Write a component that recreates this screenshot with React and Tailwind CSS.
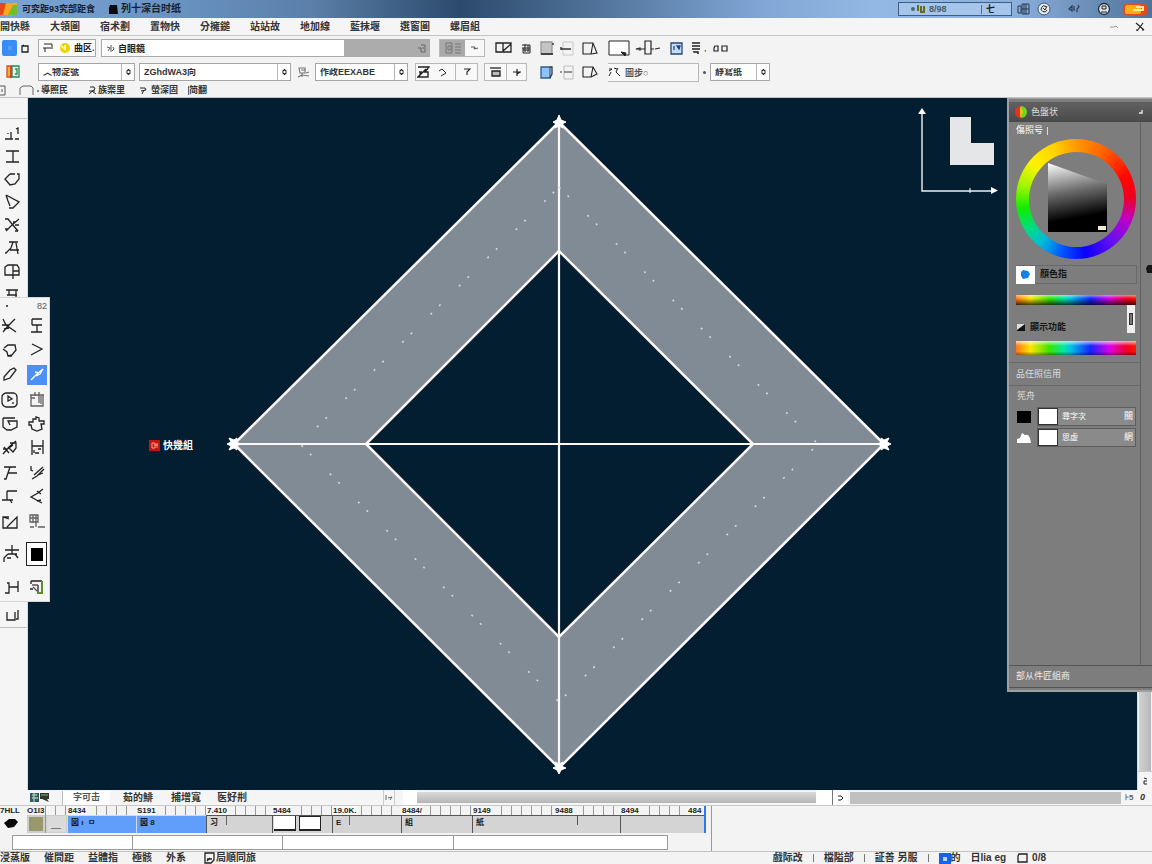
import React from "react";

function Glyph({ w = 18, h = 18, d, fill = "none", stroke = "#222", sw = 1.3, children, className = "" }) {
  return (
    <svg width={w} height={h} viewBox={`0 0 ${w} ${h}`} fill={fill} stroke={stroke} strokeWidth={sw} className={`shrink-0 ${className}`} aria-hidden="true">
      {d ? <path d={d} /> : null}
      {children}
    </svg>
  );
}

function IconButton({ label, className = "", children }) {
  return (
    <button type="button" aria-label={label} className={`flex shrink-0 items-center justify-center ${className}`}>
      {children}
    </button>
  );
}

function Combo({ label, value, className = "" }) {
  return (
    <div className={`flex h-[18px] shrink-0 items-center border border-[#a5a5a5] bg-white ${className}`}>
      <select aria-label={label} className="h-full min-w-0 flex-1 appearance-none bg-transparent px-1 text-[9px] font-semibold leading-none text-[#333] outline-none">
        <option>{value}</option>
      </select>
      <span className="flex h-full w-[13px] shrink-0 items-center justify-center border-l border-[#b5b5b5]">
        <Glyph w={7} h={8} d="M1.5 3.5 L3.5 1.5 L5.5 3.5 M1.5 4.5 L3.5 6.5 L5.5 4.5" sw={1.2} />
      </span>
    </div>
  );
}

const menus = ["開快縣", "大領圖", "宿术劃", "置物快", "分擁鎚", "站站故", "地加線", "藍抹堰", "選窗圖", "螺眉組"];

function TitleBar() {
  return (
    <header className="flex h-[18px] shrink-0 items-center overflow-hidden bg-[linear-gradient(90deg,#7ba5d6_0%,#6891c0_16%,#5b7fa9_27%,#2c4a6c_40%,#48698f_49%,#7fa6d5_66%,#93b8e3_76%,#8bb0dc_88%,#507399_100%)] text-[10px] font-semibold text-[#17212e]">
      <svg width="17" height="14" viewBox="0 0 17 14" className="shrink-0" aria-hidden="true">
        <path d="M0 1H7V13H0Z" fill="#e5481d" />
        <path d="M6 1H17V7L12 13H3Z" fill="#ffa51f" />
        <path d="M13 3H17V12L14 13H8Z" fill="#6fbd33" />
      </svg>
      <h1 className="ml-[5px] w-[80px] whitespace-nowrap text-[9px]">可究距93究部距食</h1>
      <Glyph w={11} h={11} className="ml-[6px]" stroke="none"><path d="M2 1H9L10 10H1V4Z" fill="#080b10" /></Glyph>
      <span className="ml-[2px] whitespace-nowrap">列十深台时纸</span>
      <div className="ml-auto flex items-center pr-[5px]">
        <div className="flex h-[14px] w-[114px] items-center border border-[#3f5c81] bg-[#a6c5ea] text-[9px]">
          <span className="ml-3 h-1 w-1 rounded-full bg-[#4d6885]" />
          <Glyph w={10} h={10} d="M3 1V7M6 2V8H9V2" stroke="#666c16" sw={2} />
          <span className="ml-1 text-[#4a5c70]">8/98</span>
          <span className="ml-auto mr-4 border-l border-[#566f8d] pl-1">七</span>
        </div>
        <Glyph w={14} h={14} className="ml-[5px]" d="M1 4H4V11H1Z M5 2H12V12H5ZM7 2V12M9 2V12M5 7H12" stroke="#273b56" sw={1} />
        <Glyph w={14} h={14} className="ml-[6px]"><circle cx="7" cy="7" r="6" fill="#e4e9ef" stroke="#41536b" strokeWidth="1" /><path d="M9 4.500A3 3 0 1 0 10 8M6 6L8 8L10 4" stroke="#222" strokeWidth="1" /></Glyph>
        <Glyph w={13} h={10} className="ml-[17px]" d="M1 5L4 2V7ZM6 2V7M10 1L11 3L9 5V8" stroke="#2a3c55" sw={1.2} />
        <Glyph w={14} h={14} className="ml-4"><circle cx="7" cy="7" r="5.5" fill="#dfe5eb" stroke="#1e293a" /><path d="M5 4H9V7H5ZM4 10H10" strokeWidth="1" /></Glyph>
        <IconButton label="關閉" className="ml-[12px] h-[11px] w-[24px] rounded-[3px] bg-[#e34b18]">
          <svg width="24" height="11" viewBox="0 0 24 11" aria-hidden="true"><rect x="2" y="1" width="16" height="9" rx="2" fill="#ffad16" /><path d="M13 3H20V6H10" fill="none" stroke="#ffe9a3" strokeWidth="2" /></svg>
        </IconButton>
      </div>
    </header>
  );
}

function MenuBar() {
  return (
    <nav className="flex h-[18px] shrink-0 items-center gap-[20px] overflow-hidden border-b border-[#c4c4c4] bg-[#f5f5f5] pr-1 text-[10px] font-semibold text-[#333]">
      {menus.map((m) => (
        <button key={m} type="button" className="w-[30px] shrink-0 whitespace-nowrap text-left">{m}</button>
      ))}
      <IconButton label="最小化" className="ml-auto h-4 w-3"><Glyph w={10} h={8} d="M1 4H5L7 3L9 5" stroke="#999" sw={1} /></IconButton>
      <IconButton label="關閉文件" className="-ml-2 h-4 w-4"><Glyph w={10} h={10} d="M1 1L9 8M8 1L2 9M1 8H3M7 8H9" sw={1.2} /></IconButton>
    </nav>
  );
}

function ToolRowOne() {
  return (
    <div className="flex h-[24px] shrink-0 items-center">
      <IconButton label="選取" className="ml-[2px] h-[16px] w-[15px] rounded-[2px] bg-[#398bf5]"><span className="h-1 w-1 bg-[#529cf9]" /></IconButton>
      <IconButton label="新增" className="ml-[4px] h-4 w-2"><Glyph w={8} h={9} d="M1 2H7V8H1Z M1 2L3 1" /></IconButton>
      <div className="ml-[9px] flex h-[18px] w-[58px] shrink-0 items-center border border-[#aaa] bg-[#fbfbfb] text-[9px] font-semibold">
        <Glyph w={12} h={10} className="ml-[3px]" d="M2 1H10V6M1 5H9M3 5V9" sw={1} />
        <Glyph w={12} h={12} className="ml-[5px]" stroke="none"><circle cx="6" cy="6" r="5" fill="#e9d100" /><path d="M2 4L6 7V3" stroke="#fff6a2" strokeWidth="2" /></Glyph>
        <span className="ml-[3px] whitespace-nowrap">曲区.</span>
      </div>
      <div className="ml-[5px] flex h-[18px] w-[329px] shrink-0 border border-[#aaa] bg-[#acacac]">
        <label className="flex w-[242px] items-center bg-white">
          <Glyph w={9} h={9} className="ml-1" d="M1 3L4 4L2 7M5 1V8M7 3L8 5L6 7" sw={1} stroke="#555" />
          <input aria-label="名稱" defaultValue="自眼鏡" className="ml-[3px] min-w-0 flex-1 bg-transparent text-[9px] font-semibold text-[#222] outline-none" />
        </label>
        <span className="flex flex-1 items-center justify-end pr-[3px]"><Glyph w={9} h={9} d="M1 4H4V8M4 1H8V8H4M5 4H7" stroke="#666" sw={1} /></span>
      </div>
      <div className="ml-[9px] flex h-[18px] w-[46px] shrink-0 border border-[#b8b8b8] bg-[#f8f8f8]">
        <IconButton label="檢視模式" className="w-[25px] bg-[#a9a9a9]"><Glyph w={20} h={12} d="M3 1H9V11H3ZM5 4H8V8H5ZM12 2H18M12 5H18M12 8H18M12 11H18" stroke="#777" sw={1} /></IconButton>
        <IconButton label="展開" className="w-[19px]"><Glyph w={9} h={6} d="M1 2H5L4 4L8 3" sw={1} stroke="#555" /></IconButton>
      </div>
      <IconButton label="對齊" className="ml-[10px] h-4 w-[18px]"><Glyph w={18} h={12} d="M1 1H8V10H1ZM8 1H16V10H8M8 9L16 2" sw={1.3} /></IconButton>
      <IconButton label="格線" className="ml-[8px] h-4 w-[11px]"><Glyph w={11} h={11} d="M1 2H9V10H2V5M4 1V9M7 2V9M1 5H9M2 7H9" sw={1} /></IconButton>
      <IconButton label="灰階" className="ml-[8px] h-4 w-[14px]"><Glyph w={14} h={14}><path d="M1 1H12V13H1Z" fill="#c4c4c4" stroke="#999" /><path d="M1 13H13M13 2V4" /></Glyph></IconButton>
      <IconButton label="分割" className="ml-[6px] h-4 w-[15px]"><Glyph w={15} h={15} d="M3 1H13V14H3Z" stroke="#c7c7c7" sw={1}><path d="M1 8H11M1 6V9" stroke="#333" strokeWidth="1.4" /></Glyph></IconButton>
      <IconButton label="頁面" className="ml-[7px] h-4 w-[16px]"><Glyph w={16} h={14} d="M1 2H11L15 12L9 13H1ZM11 2L9 13" sw={1.1} /></IconButton>
      <IconButton label="畫布" className="ml-[10px] h-[18px] w-[22px]"><Glyph w={22} h={17} sw={1}><path d="M1 1H21V15H1Z" fill="#fff" /><path d="M13 12L18 13L17 16Z" fill="#222" /></Glyph></IconButton>
      <IconButton label="縮放" className="ml-[5px] h-4 w-[26px]"><Glyph w={26} h={16} d="M1 9L5 8V10ZM5 9H10M16 9H19M10 1H16V14H10ZM20 9L25 8" sw={1.2} /></IconButton>
      <IconButton label="篩選" className="ml-[9px] h-4 w-[14px]"><Glyph w={14} h={13}><path d="M1 1H12V12H1Z" fill="#c4ddfb" stroke="#29466a" /><path d="M4 4V8M7 4L10 4L9 7Z" fill="#315da0" stroke="#26497d" /></Glyph></IconButton>
      <IconButton label="清單" className="ml-[7px] h-4 w-[10px]"><Glyph w={10} h={12} d="M1 1H9M1 4H9M1 7H9M3 9V10H7V12" sw={1.5} /></IconButton>
      <span className="ml-[3px] text-[9px]">,</span>
      <IconButton label="配對" className="ml-[6px] h-4 w-[16px]"><Glyph w={16} h={9} d="M2 2H5V7H1V4ZM9 2H14V7H9Z" sw={1.2} /></IconButton>
    </div>
  );
}

function ToolRowTwo() {
  return (
    <div className="flex h-[24px] shrink-0 items-center">
      <IconButton label="圖庫" className="ml-[6px] h-[14px] w-[15px]">
        <Glyph w={15} h={14}><path d="M1 1H5V12H1Z" fill="#efb32f" stroke="#d94d29" /><path d="M6 1H13V12H6Z" fill="#eaf2df" stroke="#25895c" /><path d="M9 4H11V9H9" stroke="#25895c" /><path d="M5 13V1" stroke="#cc3824" /></Glyph>
      </IconButton>
      <Combo label="圖層" value="︿物淀號" className="ml-[17px] w-[97px]" />
      <Combo label="尺寸" value="ZGhdWA3向" className="ml-[4px] w-[152px]" />
      <Glyph w={13} h={13} className="ml-[6px]" d="M2 2H8V7H3ZM4 4H9M1 11L5 9L12 10M5 7V11M9 7L12 6" stroke="#777" sw={1.1} />
      <Combo label="筆刷" value="作政EEXABE" className="ml-[5px] w-[93px]" />
      <div className="ml-[7px] flex h-[18px] w-[63px] shrink-0 border border-[#b8b8b8] bg-[#f8f8f8]">
        <IconButton label="變形" className="w-[14px]"><Glyph w={13} h={14} d="M1 2H12L8 7H11V12H1L9 4M2 12L4 7H2" sw={1.4} /></IconButton>
        <IconButton label="旋轉" className="flex-1"><Glyph w={9} h={9} d="M1 3L4 1L8 5L3 8" sw={1} /></IconButton>
        <IconButton label="翻轉" className="w-[22px] border-l border-[#b8b8b8]"><Glyph w={8} h={8} d="M1 1H7L4 4V7" sw={1.1} /></IconButton>
      </div>
      <div className="ml-[6px] flex h-[18px] w-[43px] shrink-0 border border-[#b8b8b8] bg-[#f8f8f8]">
        <IconButton label="圖層順序" className="flex-1"><Glyph w={14} h={12}><path d="M3 5H11V10H3Z" fill="#bbb" /><path d="M1 2H12" /></Glyph></IconButton>
        <IconButton label="中心點" className="w-[20px] border-l border-[#b8b8b8]"><Glyph w={10} h={9} d="M1 4H9M5 1V8M5 6L8 4" sw={1.2} /></IconButton>
      </div>
      <IconButton label="填色" className="ml-[13px] h-4 w-[14px]"><Glyph w={14} h={13}><path d="M1 1H10V12H1Z" fill="#8fc2f7" stroke="#2b5e99" /><path d="M10 1H12V8L10 12" stroke="#333" /></Glyph></IconButton>
      <IconButton label="裁切" className="ml-[6px] h-4 w-[15px]"><Glyph w={15} h={15} d="M4 1H13V14H4Z" stroke="#bbb" sw={1}><path d="M0 7H2M4 7H12" stroke="#333" /></Glyph></IconButton>
      <IconButton label="摺頁" className="ml-[7px] h-4 w-[16px]"><Glyph w={16} h={14} d="M1 2H11L15 9L9 12H1ZM11 2L9 12" sw={1.1} /></IconButton>
      <label className="ml-[10px] flex h-[19px] w-[91px] shrink-0 items-center border-y border-r border-[#b8b8b8] bg-[#f7f7f7]">
        <Glyph w={14} h={12} d="M1 3H4L1 5M6 2L9 3M10 2L8 6M3 6L1 10M8 6L12 10" sw={1} />
        <input aria-label="濃度" defaultValue="圖步○" className="ml-[3px] min-w-0 flex-1 bg-transparent text-[9px] font-semibold text-[#555] outline-none" />
      </label>
      <span className="ml-[4px] h-[3px] w-[3px] rounded-full bg-[#555]" />
      <Combo label="品質" value="靜寫纸" className="ml-[4px] w-[60px]" />
    </div>
  );
}

function ToolRowThree() {
  const item = "flex items-center whitespace-nowrap";
  return (
    <div className="flex h-[14px] shrink-0 items-center overflow-hidden border-b border-[#bfc3c6] text-[9px] font-semibold text-[#333]">
      <Glyph w={6} h={11} d="M0 1H5V10H0M2 4V7" sw={1} stroke="#555" />
      <Glyph w={16} h={11} className="ml-[13px]" d="M1 10V3L4 1M4 1H12L14 3V10" sw={1} stroke="#666" />
      <button type="button" className={`${item} ml-[2px] w-[51px]`}><span className="mr-[2px] h-[2px] w-[2px] bg-[#888]" />導照民</button>
      <button type="button" className={item}><Glyph w={9} h={9} d="M2 1H6L7 3L1 8M1 5H7M4 5L8 8" sw={1} /><span className="ml-[1px]">族案里</span></button>
      <button type="button" className={`${item} ml-[14px]`}><Glyph w={9} h={9} d="M1 2H6L7 4L2 5M5 4L3 8" sw={1} /><span className="ml-[3px]">螢深固</span></button>
      <button type="button" className={`${item} ml-[10px] border-l border-[#666]`}>简翻</button>
    </div>
  );
}

const sideTools = [
  ["筆尖", "M1 14H9M7 7V14M4 8V9M11 14H15M12 4L14 3V9"],
  ["文字游標", "M2 3H15M9 3V14M2 14H15"],
  ["多邊形", "M6 3H11M13 3H15V8L11 13L6 14L1 8L6 3"],
  ["箭頭", "M2 1L15 8L9 14H5M2 1L4 7L6 12"],
  ["變形剪", "M1 2H4L8 7L14 14M15 2L8 8L2 14M1 12H4M9 5H12M11 8H15M11 14H14"],
  ["人形", "M5 2H14M9 2L7 8L2 13H1M12 3L14 14M6 10H15"],
  ["框架", "M1 4L4 2H13L15 5V12H1ZM9 2V16M9 8H15"],
  ["標記", "M2 4H14M5 4V9M12 4V14M3 9H13"],
];

const paletteTools = [
  ["剪刀", "M2 2L5 8L15 15M14 2L7 9L2 15M1 8H8M3 12L8 11"],
  ["尺規", "M4 2H14M4 2V8M4 8H14M9 8V15M3 15H14"],
  ["套索", "M3 6L7 3H14L15 8L11 13L7 14L6 10L2 7M7 14H11"],
  ["折線", "M4 2L8 4L14 7L3 13"],
  ["橡皮擦", "M3 14V11L9 4L13 2L15 4L9 12L3 14Z"],
  ["直線", "M3 14L9 8L15 3L12 8L8 10M7 6L11 7"],
  ["播放框", "M5 2H13Q16 3 16 6V13Q15 16 12 16H5Q1 15 1 11V6Q1 3 5 2ZM7 5V10L11 8ZM12 11V13"],
  ["剪貼板", "M3 4H15V15H3ZM2 4H16M7 1V5M11 1V12M3 7H7M13 5V13"],
  ["對話框", "M2 3H14M2 3V12L6 15H10L16 12V6L7 6L9 10"],
  ["雲形", "M5 4H8V2L11 3V6H16V9H13L14 14L9 16L4 14L3 10H1V7H5Z"],
  ["節點", "M2 15L8 8L15 2M3 8L8 14M2 10H6M9 4H15V9L12 13L8 9L12 6"],
  ["梯子", "M4 1V16M15 1V15M4 7H15M10 10H13M7 14H11M6 11V14"],
  ["標尺", "M3 3H15M9 3L7 9L5 15H3M7 9H16"],
  ["斜線筆", "M3 2V6L5 7M6 11L15 3M4 15L9 12L16 5M10 11L15 9"],
  ["角線", "M6 3H16M6 3V12M1 12H12M9 12L11 15"],
  ["轉角", "M15 1L10 5L3 9L14 15M9 3L13 6M9 13L13 12"],
  ["漸層", "M8 4H2V15H16V4L6 14M2 4L8 6"],
  ["欄位", "M2 2H10V9H2ZM8 2V14M5 2V10M2 5H10M10 14H17M2 14H6"],
];

function SideBar() {
  return (
    <aside className="flex w-[28px] shrink-0 flex-col border-r border-[#ddd] bg-[#f5f5f5]">
      <div className="h-[21px] shrink-0 border-b border-[#c4c4c4]" />
      <div className="flex flex-col pt-[3px]">
        {sideTools.map(([name, d]) => (
          <IconButton key={name} label={name} className="h-[23px] w-[24px]"><Glyph w={17} h={17} d={d} /></IconButton>
        ))}
      </div>
      <IconButton label="手形" className="mt-[298px] h-[23px] w-[24px]"><Glyph w={16} h={14} d="M3 3V11H11V3M14 1V10H12" /></IconButton>
      <div className="border-b border-[#c0c0c0]" />
    </aside>
  );
}

function FloatingPalette() {
  return (
    <section className="absolute left-0 top-[199px] flex w-[50px] flex-col border border-l-0 border-[#d5d5d5] bg-[#f5f5f5] pb-[2px]">
      <div className="flex h-[16px] items-center justify-between pl-[6px] pr-[2px] text-[9px] text-[#555]"><span className="h-[2px] w-[2px] bg-[#555]" /><span>82</span></div>
      <div className="grid h-[220px] grid-cols-2 grid-rows-9">
        {paletteTools.map(([name, d], i) => (
          <div key={name} className="flex items-center justify-center">
            {i === 5 ? (
              <IconButton label={name} className="h-[20px] w-[20px] bg-[#4b8ff7]"><Glyph w={18} h={18} d={d} stroke="#fff" /></IconButton>
            ) : (
              <IconButton label={name} className={`h-[20px] w-[20px] ${i % 2 ? "" : "-ml-1"}`}><Glyph w={18} h={18} d={d} className={i === 7 || i === 17 ? "opacity-70" : ""} /></IconButton>
            )}
          </div>
        ))}
      </div>
      <div className="grid h-[40px] grid-cols-2 place-items-center">
        <IconButton label="間距" className="h-6 w-5"><Glyph w={18} h={20} d="M2 6H16M9 1V10M5 10H14M5 10L1 14V18M12 10L15 14M4 14H8" /></IconButton>
        <IconButton label="前景色" className="h-[24px] w-[21px] border border-[#222] bg-white"><span className="h-[13px] w-[12px] bg-black" /></IconButton>
      </div>
      <div className="grid h-[25px] grid-cols-2 place-items-center">
        <IconButton label="階梯" className="h-5 w-5"><Glyph w={18} h={16} d="M2 14H6V4H4M6 8H15M15 2V13" /></IconButton>
        <IconButton label="匯出" className="h-5 w-5"><Glyph w={18} h={16}><path d="M3 2H14M3 2V5M2 10H5M10 6V13" /><path d="M14 2V14H9" stroke="#5d8c31" strokeWidth="2" /><path d="M4 6H10M5 8L9 12" stroke="#555" /></Glyph></IconButton>
      </div>
    </section>
  );
}

function Canvas() {
  return (
    <div className="relative min-w-0 flex-1 overflow-hidden bg-[#021e30]">
      <svg viewBox="28 98 1109 692" className="absolute inset-0 h-full w-full" preserveAspectRatio="xMidYMid meet" role="img" aria-label="菱形">
        <path d="M559 122L884 444L559 768L234 444ZM559 251L366 444L559 637L753 444Z" fill="#808b96" fillRule="evenodd" stroke="#fdf8f4" strokeWidth="2.5" />
        <path d="M559 122V768M234 444H884" stroke="#fdf8f4" strokeWidth="2.2" />
        <path d="M559 187L818 444L559 702L300 444Z" fill="none" stroke="#d3d9de" strokeWidth="1.6" strokeDasharray="2 10 2 26" />
        <path d="M553 122L557 120L559 115L561 120L566 122L562 124L563 128L559 126L555 128L556 124ZM553 768L557 766L555 762L559 764L563 762L561 766L566 768L561 770L559 774L557 770ZM227 444L231 442L229 438L234 440L237 438L236 442L241 444L236 446L237 450L234 448L229 450L231 446ZM891 444L887 446L889 450L884 448L881 450L882 446L877 444L882 442L881 438L884 440L889 438L887 442Z" fill="#fff" stroke="#fff" strokeWidth="1" />
        <path d="M922 112V191H995" fill="none" stroke="#eef1f3" strokeWidth="1.4" />
        <path d="M922 108L926 114H918ZM998 190.500L991 187V194Z" fill="#fff" />
        <path d="M970 188V193" stroke="#fff" />
        <path d="M950 117H971V143H994V165H950Z" fill="#e5e6e8" />
      </svg>
      <div className="absolute left-[121px] top-[342px] flex items-center gap-[3px] whitespace-nowrap text-[10px] font-semibold text-white">
        <Glyph w={11} h={11}><rect x="0" y="0" width="11" height="11" fill="#bd1710" stroke="none" /><path d="M3 3H6V8H3ZM8 3V8M5 5H9" stroke="#ff9b82" strokeWidth="1" /></Glyph>
        <span>快幾組</span>
      </div>
    </div>
  );
}

function ColorPanel() {
  const bar = "w-[120px] bg-[linear-gradient(90deg,#ff741c,#ffe500_12%,#38e600_28%,#00e6a5_40%,#00bee6_46%,#1624ff_62%,#dc00e6_78%,#f00023_92%,#ff1500)]";
  return (
    <section className="absolute bottom-[98px] right-0 top-0 flex w-[145px] flex-col border border-b-2 border-l-2 border-r-0 border-[#a0a0a0] bg-[#7d7d7d] text-[10px] text-white">
      <div className="h-[4px] shrink-0 border-b border-[#5d5d5d]" />
      <div className="flex h-[19px] shrink-0 items-center border-b border-[#484848] bg-[linear-gradient(#606060,#4b4b4b)]">
        <svg width="12" height="12" viewBox="0 0 12 12" className="ml-[6px]" aria-hidden="true"><path d="M6 0A6 6 0 0 0 6 12Z" fill="#f02d25" /><path d="M6 0A6 6 0 0 1 6 12Z" fill="#6cd921" /><path d="M5 0L8 6L5 12Z" fill="#f5c21b" /></svg>
        <h2 className="ml-[4px] text-[9px] text-[#ddd]">色盤状</h2>
        <Glyph w={6} h={6} className="ml-auto mr-2" d="M4 1V4H1" stroke="#eee" />
      </div>
      <div className="flex min-h-0 flex-1">
        <div className="flex min-w-0 flex-1 flex-col border-r border-[#606060]">
          <p className="flex h-[17px] shrink-0 items-center pl-[7px] text-[9px]">傷照号<span className="ml-1 h-2 w-px bg-[#ddd]" /></p>
          <div className="ml-[7px] flex h-[120px] w-[120px] shrink-0 items-center justify-center rounded-full bg-[conic-gradient(#ff9a00,#ff6200_30deg,#ff0800_65deg,#f00020_88deg,#c000c8_112deg,#6a10ee_138deg,#0b00ff_170deg,#0057ff_195deg,#00bbd8_218deg,#00dc80_238deg,#10ed00_260deg,#a6f500_285deg,#fff200_310deg,#ffd400_335deg,#ff9a00)]">
            <div className="flex h-[95px] w-[95px] items-center justify-center rounded-full bg-[#7d7d7d]">
              <svg width="60" height="72" viewBox="0 0 60 72" className="mr-[-4px]" role="img" aria-label="明度">
                <defs><linearGradient id="shade" x1="0" y1="0" x2="0.15" y2="1"><stop offset="0" stopColor="#fff" /><stop offset="0.45" stopColor="#6d6d6d" /><stop offset="0.85" stopColor="#000" /></linearGradient></defs>
                <path d="M0 0L59 21V69H0Z" fill="url(#shade)" /><rect x="50" y="63" width="8" height="4" fill="#f1edcf" />
              </svg>
            </div>
          </div>
          <div className="ml-[7px] mr-[3px] mt-[6px] flex h-[19px] shrink-0 items-center border-y border-r border-[#696969] text-[9px] text-[#151515]">
            <span className="flex h-[18px] w-[19px] items-center justify-center bg-white"><Glyph w={11} h={11} stroke="none"><path d="M3 1L8 2L10 5L8 9L3 10L1 7V3Z" fill="#167fe5" /></Glyph></span>
            <span className="ml-[5px] font-semibold">顏色指</span>
          </div>
          <div className={`ml-[7px] mt-[11px] h-[10px] shrink-0 ${bar}`}><div className="h-full bg-[linear-gradient(#ffffff80,#ffffff00_35%,#000000bb)]" /></div>
          <div className="ml-[7px] flex h-[36px] w-[120px] shrink-0 items-center text-[9px] text-[#151515]">
            <Glyph w={10} h={9} stroke="none" className="mt-2"><path d="M1 1H9V8H1Z" fill="#111" /><path d="M1 1H9L1 7Z" fill="#ddd" /></Glyph>
            <span className="ml-[4px] mt-2 font-semibold">顯示功能</span>
            <span className="mb-2 ml-auto mr-px flex h-[28px] w-[8px] items-center justify-center bg-[#eee]"><span className="h-3 w-1 border border-[#333] bg-[#777]" /></span>
          </div>
          <div className={`ml-[7px] h-[14px] shrink-0 ${bar}`}><div className="h-full bg-[linear-gradient(#ffffffb0,#ffffff00_35%,#ffffff00_75%,#00000066)]" /></div>
          <p className="mt-[7px] flex h-[24px] shrink-0 items-center border-y border-[#686868] pl-[7px] text-[9px] text-[#ddd]">品任照信用</p>
          <p className="flex h-[20px] shrink-0 items-center pl-[8px] text-[9px] text-[#ddd]">筅舟</p>
          {[["尋字次", "關", 0], ["思虚", "網", 1]].map(([name, state, i]) => (
            <div key={name} className="ml-[8px] mr-[4px] flex h-[21px] shrink-0 items-center text-[9px]">
              {i ? <Glyph w={14} h={12} stroke="none"><path d="M0 11V7L3 6L5 1L8 3L11 3L13 6L14 11Z" fill="#fff" /></Glyph> : <span className="h-[12px] w-[14px] bg-black" />}
              <button type="button" className="ml-[6px] flex h-[19px] min-w-0 flex-1 items-center border border-[#5d5d5d] bg-[#8a8a8a] pr-[2px]">
                <span className="h-[17px] w-[20px] border border-[#333] bg-white" />
                <span className="ml-[4px] text-[8px]">{name}</span><span className="ml-auto">{state}</span>
              </button>
            </div>
          ))}
        </div>
        <div className="w-[11px] shrink-0 pl-[5px] pt-[143px]"><Glyph w={6} h={8} stroke="none"><path d="M2 0H6V8H1L0 3Z" fill="#161616" /></Glyph></div>
      </div>
      <p className="flex h-[23px] shrink-0 items-center border-y border-[#555] pl-[7px] text-[9px] text-[#eee]">部从件匠組商</p>
      <div className="h-[2px] shrink-0" />
    </section>
  );
}

function ScrollRow() {
  return (
    <div className="flex h-[16px] shrink-0 items-center overflow-hidden border-b border-[#c9c9c9] bg-[#f5f5f5] pl-[28px] text-[10px] font-semibold text-[#333]">
      <Glyph w={20} h={12} className="ml-[2px]" stroke="none"><path d="M0 1H9V10H0Z" fill="#355863" /><path d="M2 3H7M2 6H8M4 1V10" stroke="#a3c9b5" /><path d="M10 1H19V7H17L19 10L12 7H10Z" fill="#31372c" /><path d="M11 3H18" stroke="#6c9b5a" /></Glyph>
      <button type="button" className="ml-[12px] h-[14px] w-[48px] whitespace-nowrap border-l border-[#bbb] bg-white text-[9px] text-[#555]">字可击</button>
      <button type="button" className="ml-[13px] w-[30px] whitespace-nowrap">茹的鯡</button>
      <button type="button" className="ml-[18px] w-[30px] whitespace-nowrap">捕增寬</button>
      <button type="button" className="ml-[16px] w-[30px] whitespace-nowrap">医好㓝</button>
      <IconButton label="向左捲動" className="ml-[136px] h-full w-[12px] border-x border-[#ccc]"><Glyph w={8} h={7} d="M1 1V6M3 4L7 3L5 6" sw={1} stroke="#666" /></IconButton>
      <span className="ml-[8px] h-full w-[14px] shrink-0 bg-white" />
      <div className="h-[11px] min-w-0 flex-[398] bg-[linear-gradient(#dadada,#b5b5b5)]" />
      <span className="h-full w-[17px] shrink-0 border-r border-[#777] bg-white" />
      <IconButton label="向右捲動" className="h-full w-[15px] bg-white"><Glyph w={7} h={7} d="M1 2H4L6 4L4 6H1" sw={1} /></IconButton>
      <div className="ml-[2px] h-[12px] min-w-0 flex-[271] bg-[#c1c0c0]" />
      <span className="ml-[4px] w-[15px] text-[8px] text-[#666]">⊦5</span>
      <span className="w-[12px] text-[9px] italic">0</span>
    </div>
  );
}

function TimeLabel({ children }) {
  return (
    <span className="block h-[9px] whitespace-nowrap bg-[repeating-linear-gradient(90deg,transparent_0_9px,#999_9px_10px)] text-[8px] font-bold leading-[9px]">
      <span className="bg-[#f8f8f8] px-px">{children}</span>
    </span>
  );
}

const frames = [
  ["8434", "w-[69px]", "bg-[#619efb]", "図 ı  ㅁ"],
  ["S191", "w-[70px]", "bg-[#619efb]", "図 8"],
  ["7.410", "w-[66px]", "bg-[#d4d4d4]", "习"],
  ["5484", "w-[60px]", "bg-[#d4d4d4]", null],
  ["19.0K.", "w-[69px]", "bg-[#d4d4d4]", "E"],
  ["8484/", "w-[71px]", "bg-[#d4d4d4]", "組"],
  ["9149", "w-[148px]", "bg-[#d4d4d4]", "紙", "9488"],
  ["8494", "w-[84px]", "bg-[#d4d4d4]", "", "484"],
];

function Timeline() {
  return (
    <div className="flex h-[46px] shrink-0 flex-col border-b border-[#c2c2c2] bg-[#f3f3f3] text-[#1c1c1c]">
      <div className="flex min-h-0 flex-1">
        <div className="flex w-[712px] shrink-0 flex-col border-r border-[#999]">
          <div className="flex h-[27px] shrink-0">
            <div className="w-[27px] shrink-0">
              <span className="block h-[9px] text-[8px] font-bold leading-[9px]">7HLL</span>
              <Glyph w={20} h={16} stroke="none"><path d="M4 8L9 4L15 4L18 7L14 12L8 13Z" fill="#080808" /></Glyph>
            </div>
            <div className="w-[19px] shrink-0 border-r border-[#999]">
              <span className="block h-[9px] text-[8px] font-bold leading-[9px]">O1I3</span>
              <div className="h-[18px] border-2 border-[#ccc] bg-[#98986a]" />
            </div>
            <div className="w-[21px] shrink-0"><TimeLabel> </TimeLabel><div className="flex h-[18px] items-center border border-[#ccc] bg-[#dadada] px-1"><span className="mt-2 h-px w-[10px] bg-[#777]" /></div></div>
            {frames.map(([mark, width, color, text, endMark], i) => (
              <div key={mark} className={`${width} shrink-0`}>
                <div className="flex">
                  <div className="min-w-0 flex-1"><TimeLabel>{mark}</TimeLabel></div>
                  {endMark ? <div className={i === 6 ? "w-[66px]" : "w-[17px]"}><TimeLabel>{endMark}</TimeLabel></div> : null}
                </div>
                <div className={`flex h-[18px] border-l border-t ${i < 2 ? "border-[#c9dbf5]" : "border-[#555]"} ${color}`}>
                  {text === null ? (
                    <div className="flex gap-[3px] pl-px"><span className="h-[15px] w-[22px] border-b-2 border-r border-[#222] bg-white" /><span className="h-[15px] w-[22px] border border-b-2 border-[#222] bg-white" /></div>
                  ) : (
                    <span className="whitespace-pre pl-[3px] text-[8px] font-semibold leading-[13px]">{text}</span>
                  )}
                  {i === 2 || i === 4 ? <span className="ml-2 h-[9px] w-px bg-[#666]" /> : null}
                  {i === 6 ? <span className="ml-auto mr-[42px] h-[9px] w-px bg-[#555]" /> : null}
                </div>
              </div>
            ))}
            <span className="h-[27px] w-[2px] bg-[#2c79f3]" />
          </div>
          <div className="mt-[2px] flex h-[15px] pl-[12px]">
            <span className="w-[121px] border border-[#999] bg-white" />
            <span className="w-[150px] border-y border-r border-[#999] bg-white" />
            <span className="w-[171px] border-y border-r border-[#999] bg-white" />
            <span className="w-[214px] border-y border-r border-[#999] bg-white" />
          </div>
        </div>
      </div>
    </div>
  );
}

function StatusBar() {
  const sep = <span className="mt-[2px] h-[8px] w-px bg-[#777]" />;
  return (
    <footer className="flex h-[12px] shrink-0 bg-[#f3f3f3] text-[10px] font-semibold leading-[12px] text-[#333]">
      <div className="flex shrink-0 gap-[14px] whitespace-nowrap">
        <span>浸蒸版</span><span>催間距</span><span>益體指</span><span>極骸</span><span>外系</span>
        <span className="ml-[3px] flex"><Glyph w={12} h={12} d="M2 1H11V8L8 11H2ZM4 7H9M4 9L7 6" className="mr-px" />局順同旅</span>
      </div>
      <div className="ml-auto flex shrink-0 gap-[10px] whitespace-nowrap pr-[106px]">
        <span>戲际改</span>{sep}<span>檔隘部</span>{sep}<span>証善 另服</span>{sep}
        <span className="flex"><Glyph w={12} h={12} stroke="none"><path d="M0 1H12V12H0Z" fill="#1762e7" /><path d="M4 5H8V9H4Z" fill="#b8d4ff" /></Glyph>的</span>
        <span>日lia eg</span>
        <span className="flex gap-1"><Glyph w={12} h={12} d="M3 2H11V10H2V4Z" />0/8</span>
      </div>
    </footer>
  );
}

export default function App() {
  return (
    <div className="flex h-screen min-w-0 flex-col overflow-hidden bg-[#f3f3f3] font-['Liberation_Sans','Noto_Sans_CJK_TC',sans-serif] leading-none text-[#222]">
      <TitleBar />
      <MenuBar />
      <ToolRowOne />
      <ToolRowTwo />
      <ToolRowThree />
      <main className="relative flex min-h-0 flex-1">
        <SideBar />
        <Canvas />
        <div className="flex w-[15px] shrink-0 flex-col border-l border-[#ddd] bg-[#f5f5f5]">
          <div className="mx-px min-h-0 flex-1 bg-[linear-gradient(90deg,#d2d2d2,#b8b8b8)]" />
          <IconButton label="向下捲動" className="h-[19px] w-full border-t border-[#ccc]"><Glyph w={7} h={8} d="M2 1L5 2M2 4H5M2 4V7H5" sw={1} /></IconButton>
        </div>
        <ColorPanel />
        <FloatingPalette />
      </main>
      <ScrollRow />
      <Timeline />
      <StatusBar />
    </div>
  );
}
